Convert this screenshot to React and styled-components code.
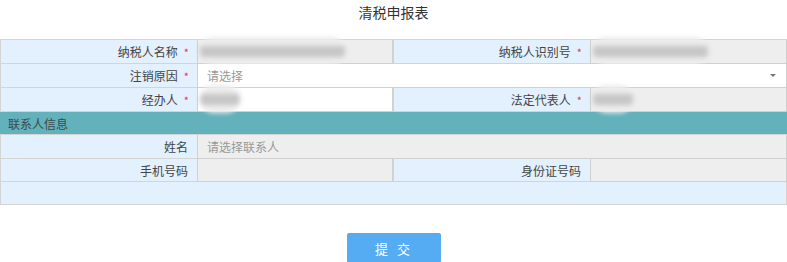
import React from 'react';
import styled, { createGlobalStyle } from 'styled-components';

const GlobalStyle = createGlobalStyle`
    body {
        margin: 0;
        background: #fff;
        font-family: "Microsoft YaHei", "Noto Sans CJK SC", sans-serif;
    }
`;

const App = () => {
    return (
        <Page>
            <GlobalStyle />
            <Title>清税申报表</Title>
            <Table>
                <Label>纳税人名称<Star>*</Star></Label>
                <Field $gray><Blur $w={145} /></Field>
                <Label>纳税人识别号<Star>*</Star></Label>
                <Field $gray><Blur $w={115} /></Field>

                <Label>注销原因<Star>*</Star></Label>
                <Field $span={3}>
                    <Placeholder>请选择</Placeholder>
                    <Caret />
                </Field>

                <Label>经办人<Star>*</Star></Label>
                <Field><Blur $w={40} /></Field>
                <Label>法定代表人<Star>*</Star></Label>
                <Field $gray><Blur $w={40} /></Field>

                <Section>联系人信息</Section>

                <Label>姓名</Label>
                <Field $gray $span={3}><Placeholder>请选择联系人</Placeholder></Field>

                <Label>手机号码</Label>
                <Field $gray />
                <Label>身份证号码</Label>
                <Field $gray />

                <Empty />
            </Table>
            <Footer>
                <Submit type="button">提 交</Submit>
            </Footer>
        </Page>
    );
};

// 样式
const Page = styled.div`
    width: 787px;
    color: #333;
`;

const Title = styled.div`
    height: 39px;
    line-height: 24px;
    text-align: center;
    font-size: 14px;
    color: #333;
`;

const Table = styled.div`
    display: grid;
    grid-template-columns: 197px 196px 197px 197px;
    grid-template-rows: 24px 24px 24px 23px 24px 23px 23px;
    border-top: 1px solid #d4d4d4;
`;

const Label = styled.div`
    background: #e3f0fd;
    border-bottom: 1px solid #d4d4d4;
    border-left: 1px solid #d4d4d4;
    display: flex;
    align-items: center;
    justify-content: flex-end;
    padding-right: 9px;
    font-size: 12px;
    color: #444;
    box-sizing: border-box;
`;

const Star = styled.span`
    color: #e8374a;
    font-size: 11px;
    margin-left: 6px;
    margin-right: -1px;
`;

const Field = styled.div`
    position: relative;
    grid-column: span ${p => p.$span || 1};
    background: ${p => (p.$gray ? '#eeeeee' : '#ffffff')};
    border: 1px solid #d0d0d0;
    border-top: none;
    display: flex;
    align-items: center;
    padding-left: 9px;
    font-size: 12px;
    box-sizing: border-box;
`;

const Placeholder = styled.span`
    color: #999;
    font-size: 12px;
`;

const Caret = styled.span`
    position: absolute;
    right: 10px;
    top: 10px;
    width: 0;
    height: 0;
    border-left: 3px solid transparent;
    border-right: 3px solid transparent;
    border-top: 3px solid #777;
`;

const Blur = styled.span`
    position: absolute;
    left: 2px;
    top: -3px;
    width: ${p => p.$w}px;
    height: 28px;
    border-radius: 14px;
    background: linear-gradient(#ececec 0 32%, #c6c6c6 32% 72%, #ececec 72%);
    filter: blur(2.5px);
`;

const Section = styled.div`
    grid-column: 1 / -1;
    background: #62b1bb;
    border-bottom: 1px solid #d4d4d4;
    display: flex;
    align-items: center;
    padding-left: 8px;
    font-size: 12px;
    color: #3c4a4c;
`;

const Empty = styled.div`
    grid-column: 1 / -1;
    background: #e3f0fd;
    border: 1px solid #d4d4d4;
    border-top: none;
`;

const Footer = styled.div`
    display: flex;
    justify-content: center;
    padding-top: 28px;
`;

const Submit = styled.button`
    width: 94px;
    height: 30px;
    margin-left: 1px;
    background: #55acf3;
    border: none;
    border-radius: 2px;
    color: #fff;
    font-size: 13px;
    font-family: inherit;
    letter-spacing: 3px;
    cursor: pointer;
`;

export default App;
